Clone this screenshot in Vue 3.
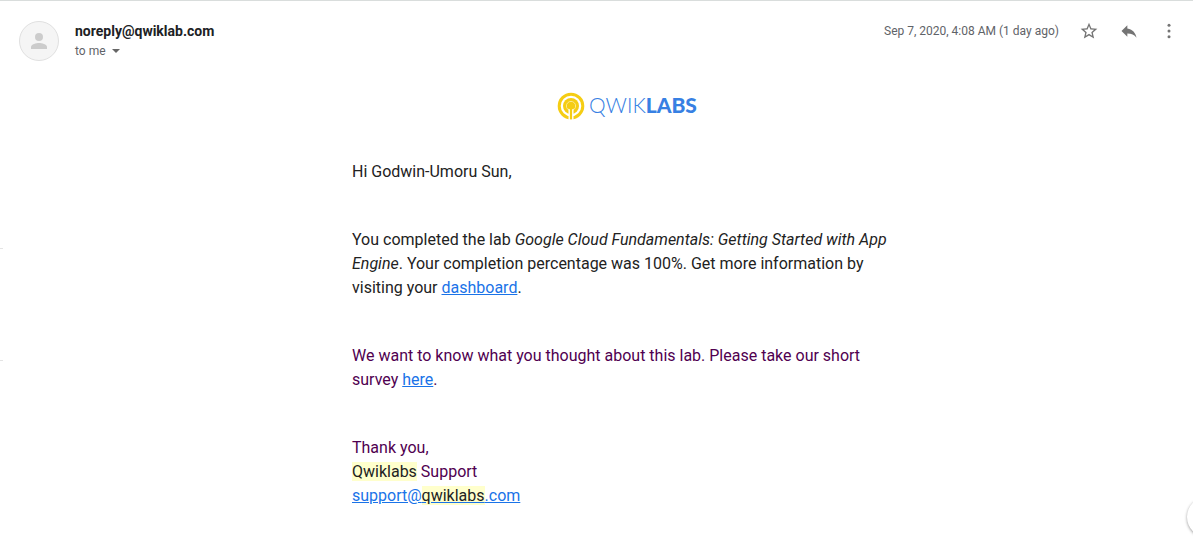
<script setup>
const sender = 'noreply@qwiklab.com'
const sentAt = 'Sep 7, 2020, 4:08 AM (1 day ago)'
</script>

<template>
  <main class="message">
    <header class="head">
      <div class="avatar">
        <svg viewBox="0 0 24 24" width="24" height="24" aria-hidden="true">
          <circle cx="12" cy="8" r="4" />
          <path d="M12 14c-2.670 0-8 1.340-8 4v2h16v-2c0-2.660-5.330-4-8-4z" />
        </svg>
      </div>
      <div class="who">
        <h3 class="sender">{{ sender }}</h3>
        <button class="recipient" type="button">
          to me
          <svg viewBox="0 0 8 4" width="8" height="4" aria-hidden="true"><path d="M0 0h8l-4 4z" /></svg>
        </button>
      </div>
      <time class="date">{{ sentAt }}</time>
      <div class="actions">
        <button type="button" aria-label="Star">
          <svg viewBox="0 0 24 24" width="20" height="20"><path d="M22 9.240l-7.190-.62L12 2 9.190 8.630 2 9.240l5.460 4.730L5.820 21 12 17.270 18.180 21l-1.630-7.030L22 9.240zM12 15.400l-3.760 2.270 1-4.280-3.320-2.880 4.380-.38L12 6.100l1.710 4.040 4.380.38-3.320 2.880 1 4.280L12 15.400z" /></svg>
        </button>
        <button type="button" aria-label="Reply">
          <svg viewBox="0 0 24 24" width="20" height="20"><path d="M10 9V5l-7 7 7 7v-4.100c5 0 8.500 1.600 11 5.100-1-5-4-10-11-11z" /></svg>
        </button>
        <button type="button" aria-label="More">
          <svg viewBox="0 0 24 24" width="20" height="20"><circle cx="12" cy="5" r="1.800" /><circle cx="12" cy="12" r="1.800" /><circle cx="12" cy="19" r="1.800" /></svg>
        </button>
      </div>
    </header>

    <div class="content">
      <article class="body">
        <div class="brand">
          <svg viewBox="0 0 28 28" width="28" height="28" aria-hidden="true">
            <circle cx="14" cy="14" r="11.800" fill="none" stroke="#f5cd13" stroke-width="3" />
            <circle cx="14" cy="14" r="8" fill="#f5cd13" />
            <circle cx="14" cy="14" r="4.600" fill="none" stroke="#fbe88f" stroke-width="1" />
            <path d="M11.500 16v12h5v-12z" fill="#fff" />
            <path d="M12.900 14h2.200v13.400h-2.200z" fill="#f5cd13" />
            <circle cx="14" cy="14" r="3.600" fill="#f5cd13" />
          </svg>
          <span class="wordmark">QWIK<b>LABS</b></span>
        </div>
        <p>Hi Godwin-Umoru Sun,</p>
        <p>
          You completed the lab <em>Google Cloud Fundamentals: Getting Started with App Engine</em>.
          Your completion percentage was 100%. Get more information by visiting your
          <a href="#dashboard">dashboard</a>.
        </p>
        <p class="quoted">
          We want to know what you thought about this lab. Please take our short survey
          <a href="#survey">here</a>.
        </p>
        <p class="quoted">
          Thank you,<br />
          <mark>Qwiklabs</mark> Support<br />
          <a href="mailto:support@qwiklabs.com">support@<mark>qwiklabs</mark>.com</a>
        </p>
      </article>
    </div>

    <i class="edge first"></i>
    <i class="edge second"></i>
    <button class="panel-toggle" type="button" aria-label="Show side panel"></button>
  </main>
</template>

<style>
body {
  margin: 0;
  background: #fff;
}
</style>

<style scoped>
.message {
  position: relative;
  box-sizing: border-box;
  min-height: 100vh;
  overflow: hidden;
  border-top: 1px solid #d9dddc;
  background: #fff;
  color: #222;
  font-family: Roboto, Arial, sans-serif;
}
.head {
  display: flex;
  align-items: flex-start;
  padding: 20px 14px 0 19px;
}
.avatar {
  box-sizing: border-box;
  display: flex;
  align-items: center;
  justify-content: center;
  width: 40px;
  height: 40px;
  margin-right: 16px;
  border: 1px solid #e0e0e0;
  border-radius: 50%;
  background: #f5f5f5;
}
.avatar svg {
  fill: #ccc;
}
.who {
  flex: 1;
}
.sender {
  margin: 0;
  font-size: 14px;
  font-weight: 700;
  line-height: 20px;
  color: #202124;
}
button {
  padding: 0;
  border: 0;
  background: none;
  font-family: inherit;
  cursor: pointer;
}
.recipient {
  display: flex;
  align-items: center;
  gap: 6px;
  font-size: 12px;
  line-height: 20px;
  color: #5f6368;
}
svg {
  display: block;
}
.recipient svg {
  fill: #666;
}
.date {
  font-size: 12px;
  line-height: 20px;
  color: #5f6368;
}
.actions {
  display: flex;
  gap: 20px;
  margin-left: 20px;
}
.actions button {
  width: 20px;
  height: 20px;
}
.actions svg {
  fill: #747474;
}
.content {
  padding: 31px 14px 0 75px;
}
.body {
  max-width: 550px;
  margin: 0 auto;
  font-size: 16px;
  line-height: 24px;
}
.brand {
  display: flex;
  align-items: flex-start;
  justify-content: center;
  gap: 4px;
  height: 28px;
  margin-bottom: 40px;
}
.wordmark {
  font-family: Lato, sans-serif;
  font-size: 21px;
  font-weight: 300;
  line-height: 26px;
  color: #3780e3;
}
.wordmark b {
  font-weight: 900;
}
p {
  margin: 0 0 44px;
}
p:last-child {
  margin-bottom: 0;
}
p.quoted {
  color: #500050;
}
a {
  color: #1a73e8;
}
mark {
  background: #ffc;
  color: #222;
}
.edge {
  position: absolute;
  left: 0;
  width: 3px;
  height: 1px;
  background: #e4e4e4;
}
.first {
  top: 247px;
}
.second {
  top: 359px;
}
.panel-toggle {
  position: absolute;
  right: -34px;
  bottom: 6px;
  width: 40px;
  height: 40px;
  border-radius: 50%;
  background: #fff;
  box-shadow: 0 1px 3px #0006;
}
</style>
